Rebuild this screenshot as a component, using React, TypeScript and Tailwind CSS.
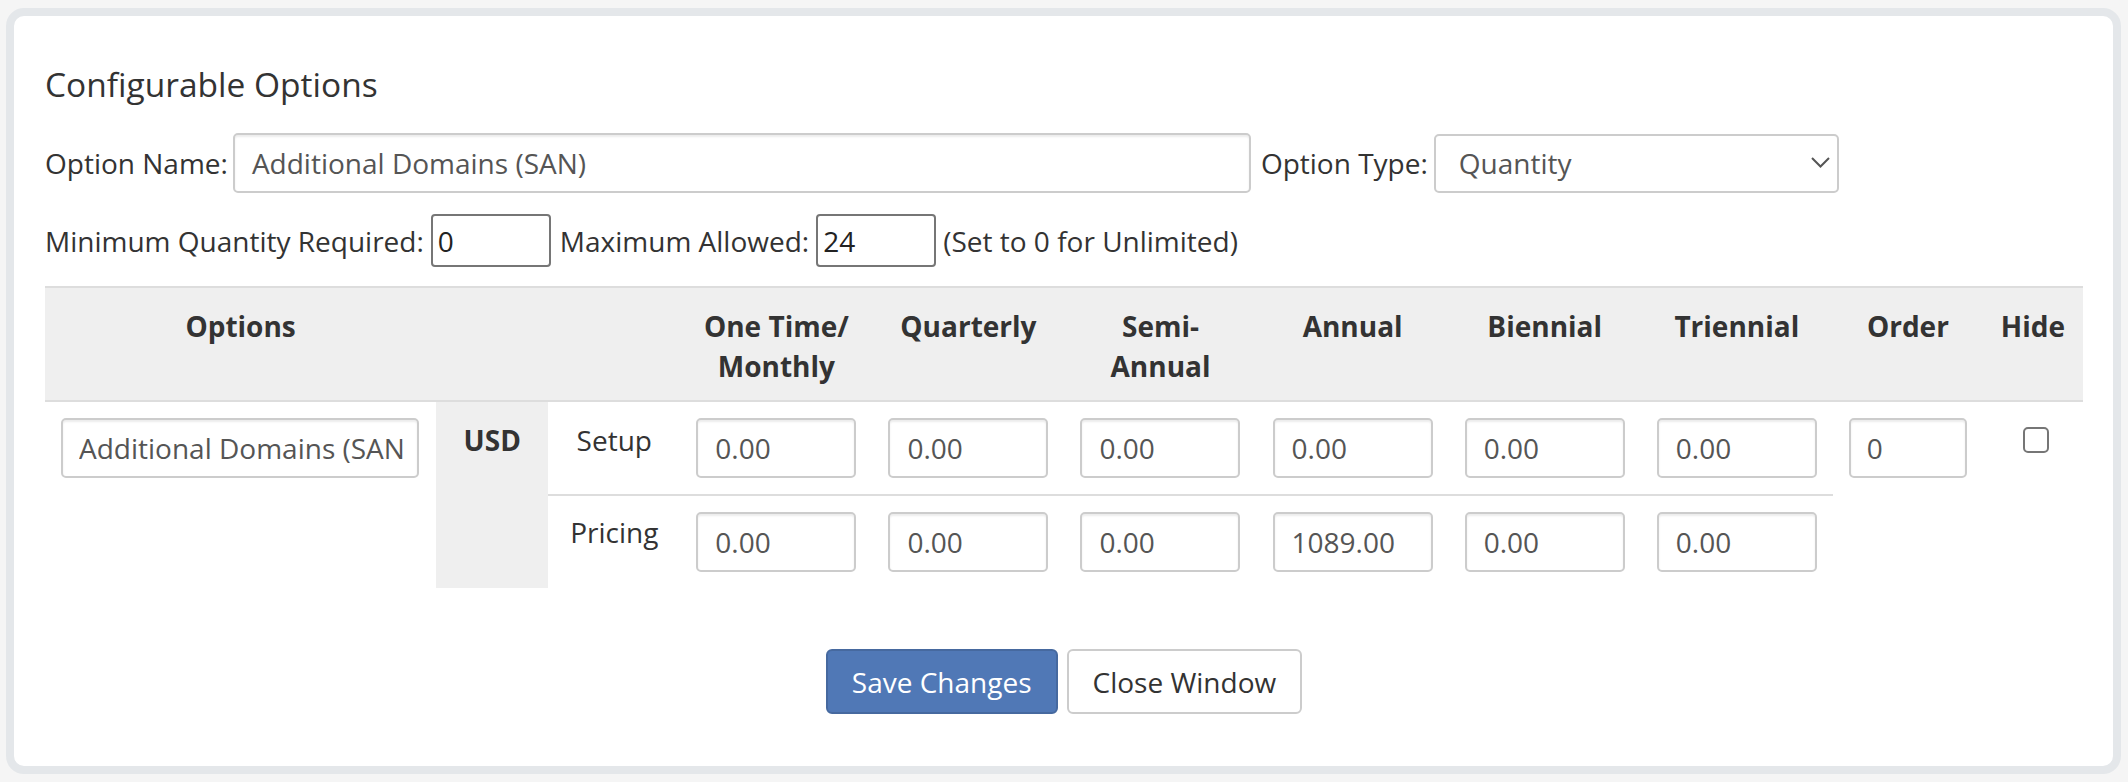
import React from "react";

const font = { fontFamily: '"Open Sans", "Liberation Sans", sans-serif' };

function PriceInput({ value }: { value: string }) {
  return (
    <div className="w-[160px] h-[60px] border-2 border-[#cccccc] rounded-[5px] bg-white flex items-center pl-[17px] text-[#555555] shadow-[inset_0_2px_2px_rgba(0,0,0,0.075)] overflow-hidden whitespace-nowrap">
      {value}
    </div>
  );
}

export default function App() {
  const setup = ["0.00", "0.00", "0.00", "0.00", "0.00", "0.00"];
  const pricing = ["0.00", "0.00", "0.00", "1089.00", "0.00", "0.00"];
  const headers: React.ReactNode[] = [
    <>One Time/<br />Monthly</>,
    <>Quarterly</>,
    <>Semi-<br />Annual</>,
    <>Annual</>,
    <>Biennial</>,
    <>Triennial</>,
  ];
  return (
    <div
      className="w-[2128px] h-[782px] bg-[#f5f5f5] pt-[8px] pl-[6px] pr-[8px] pb-[8px] flex text-[28px] leading-[40px] text-[#333333]"
      style={font}
    >
      <div className="flex-1 bg-white border-[8px] border-[#e4e7ea] rounded-[18px] pl-[31px] pr-[30px] pt-[48px] flex flex-col">
        <div className="text-[33.5px] leading-[40px] text-[#333333]">Configurable Options</div>

        <div className="mt-[29px] flex items-center h-[60px]">
          <span>Option Name:</span>
          <div className="ml-[5px] w-[1018px] h-[60px] border-2 border-[#cccccc] rounded-[5px] flex items-center pl-[17px] text-[#555555] shadow-[inset_0_2px_2px_rgba(0,0,0,0.075)]">
            Additional Domains (SAN)
          </div>
          <span className="ml-[10px]">Option Type:</span>
          <div className="ml-[6px] w-[405px] h-[59px] border-2 border-[#cccccc] rounded-[5px] flex items-center pl-[23px] pr-[7px] text-[#555555] justify-between">
            <span>Quantity</span>
            <svg width="19" height="11" viewBox="0 0 19 11" className="mb-[2px]">
              <polyline points="1,1 9.5,9.5 18,1" fill="none" stroke="#555555" strokeWidth="2" />
            </svg>
          </div>
        </div>

        <div className="mt-[21px] flex items-center h-[53px]">
          <span>Minimum Quantity Required:</span>
          <div className="ml-[7px] w-[120px] h-[53px] border-2 border-[#767676] rounded-[4px] flex items-center pl-[5px] text-[#222222]">0</div>
          <span className="ml-[9px]">Maximum Allowed:</span>
          <div className="ml-[7px] w-[120px] h-[53px] border-2 border-[#767676] rounded-[4px] flex items-center pl-[5px] text-[#222222]">24</div>
          <span className="ml-[7px]">(Set to 0 for Unlimited)</span>
        </div>

        <table className="mt-[19px] w-[2038px] table-fixed border-collapse">
          <colgroup>
            <col className="w-[391px]" />
            <col className="w-[112px]" />
            <col className="w-[132px]" />
            <col className="w-[192px]" />
            <col className="w-[192px]" />
            <col className="w-[192px]" />
            <col className="w-[192px]" />
            <col className="w-[192px]" />
            <col className="w-[192px]" />
            <col className="w-[150px]" />
            <col className="w-[100px]" />
          </colgroup>
          <thead>
            <tr className="bg-[#efefef] border-t-2 border-b-2 border-[#dddddd]">
              <th className="font-bold text-center align-top pt-[18px] pb-[14px]">Options</th>
              <th colSpan={2}></th>
              {headers.map((h, i) => (
                <th key={i} className="font-bold text-center align-top pt-[18px] pb-[14px]">
                  {h}
                </th>
              ))}
              <th className="font-bold text-center align-top pt-[18px] pb-[14px]">Order</th>
              <th className="font-bold text-center align-top pt-[18px] pb-[14px]">Hide</th>
            </tr>
          </thead>
          <tbody>
            <tr>
              <td rowSpan={2} className="align-top pt-[16px] pl-[16px] pr-[17px]">
                <div className="w-[358px] h-[60px] border-2 border-[#cccccc] rounded-[5px] flex items-center pl-[16px] pr-[12px] text-[#555555] shadow-[inset_0_2px_2px_rgba(0,0,0,0.075)]">
                  <span className="block overflow-hidden whitespace-nowrap">Additional Domains (SAN)</span>
                </div>
              </td>
              <td rowSpan={2} className="align-top bg-[#efefef] text-center font-bold pt-[18px]">USD</td>
              <td className="align-top text-center pt-[18px]">Setup</td>
              {setup.map((v, i) => (
                <td key={i} className="align-top pt-[16px] pb-[16px] px-[16px]">
                  <PriceInput value={v} />
                </td>
              ))}
              <td rowSpan={2} className="align-top pt-[16px] pl-[16px]">
                <div className="w-[118px] h-[60px] border-2 border-[#cccccc] rounded-[5px] flex items-center pl-[16px] text-[#555555] shadow-[inset_0_2px_2px_rgba(0,0,0,0.075)]">0</div>
              </td>
              <td rowSpan={2} className="align-top pt-[25px]">
                <div className="flex justify-center pl-[6px]">
                  <div className="w-[26px] h-[26px] border-2 border-[#767676] rounded-[5px] bg-white" />
                </div>
              </td>
            </tr>
            <tr>
              <td className="align-top text-center pt-[16px] border-t-2 border-[#dddddd]">Pricing</td>
              {pricing.map((v, i) => (
                <td key={i} className="align-top pt-[16px] pb-[16px] px-[16px] border-t-2 border-[#dddddd]">
                  <PriceInput value={v} />
                </td>
              ))}
            </tr>
          </tbody>
        </table>

        <div className="mt-[61px] flex justify-center gap-[9px]">
          <div className="h-[65px] px-[24px] flex items-center bg-[#5078b6] border-2 border-[#46699f] rounded-[6px] text-white">
            Save Changes
          </div>
          <div className="h-[65px] px-[24px] flex items-center bg-white border-2 border-[#cccccc] rounded-[6px] text-[#333333]">
            Close Window
          </div>
        </div>
      </div>
    </div>
  );
}
